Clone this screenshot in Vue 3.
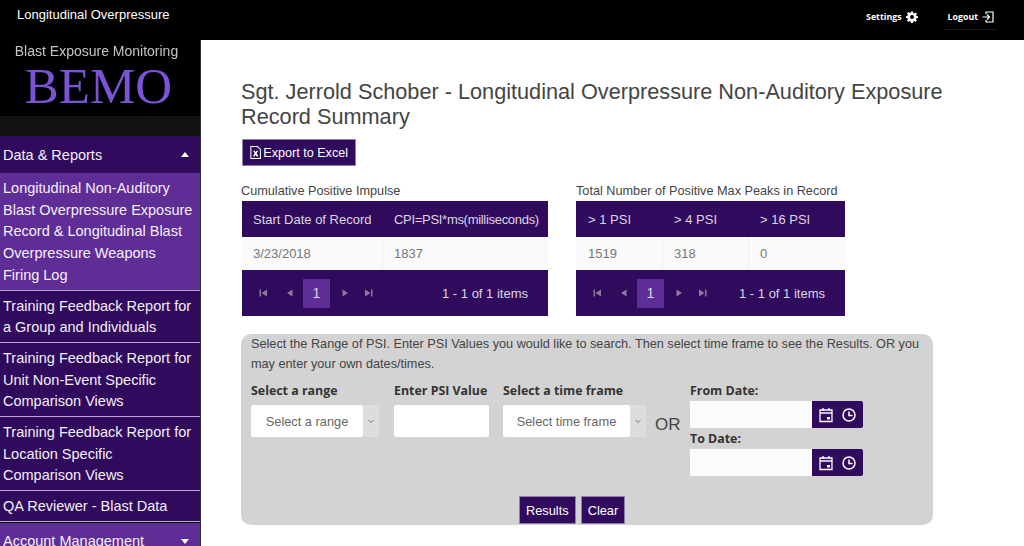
<script setup>
const menu = [
  { lines: ["Longitudinal Non-Auditory", "Blast Overpressure Exposure", "Record & Longitudinal Blast", "Overpressure Weapons", "Firing Log"], active: true },
  { lines: ["Training Feedback Report for", "a Group and Individuals"] },
  { lines: ["Training Feedback Report for", "Unit Non-Event Specific", "Comparison Views"] },
  { lines: ["Training Feedback Report for", "Location Specific", "Comparison Views"] },
  { lines: ["QA Reviewer - Blast Data"] },
]
const dateFields = ["From Date:", "To Date:"]
const tables = [
  { title: "Cumulative Positive Impulse", cls: "t1", heads: ["Start Date of Record", "CPI=PSI*ms(milliseconds)"], cells: ["3/23/2018", "1837"] },
  { title: "Total Number of Positive Max Peaks in Record", cls: "t2", heads: ["> 1 PSI", "> 4 PSI", "> 16 PSI"], cells: ["1519", "318", "0"] },
]
</script>

<template>
  <div class="page">
    <header class="topbar">
      <div class="brand">Longitudinal Overpressure</div>
      <div class="top-links">
        <a class="top-link">Settings
          <svg width="12" height="12" viewBox="0 0 24 24"><path fill="#fff" fill-rule="evenodd" d="M10 1h4l.6 3.2 1.900.8 2.700-1.800 2.800 2.800-1.800 2.700.8 1.900L24 10v4l-3.200.6-.8 1.900 1.800 2.700-2.800 2.800-2.700-1.800-1.900.8L14 24h-4l-.6-3.200-1.900-.8-2.700 1.800L2 19l1.800-2.700-.8-1.900L0 14v-4l3.200-.6.800-1.900L2 5l2.800-2.800 2.700 1.800 1.900-.8zM12 8a4 4 0 1 0 0 8 4 4 0 0 0 0-8z"/></svg>
        </a>
        <a class="top-link logout">Logout
          <svg width="12" height="12" viewBox="0 0 24 24" fill="none" stroke="#fff" stroke-width="2.400"><path d="M8 6V2h14v20H8v-4"/><path d="M1 12h13M10 7l5 5-5 5"/></svg>
        </a>
      </div>
    </header>
    <div class="body">
      <aside class="sidebar">
        <div class="logo">
          <div class="logo-sub">Blast Exposure Monitoring</div>
          <div class="logo-main">BEMO</div>
        </div>
        <div class="gap"></div>
        <div class="section">Data &amp; Reports<span class="caret up"></span></div>
        <div v-for="(item, i) in menu" :key="i" class="item" :class="{ active: item.active }">
          <div v-for="line in item.lines" :key="line">{{ line }}</div>
        </div>
        <div class="section account">Account Management<span class="caret"></span></div>
      </aside>
      <main class="content">
        <h1>Sgt. Jerrold Schober - Longitudinal Overpressure Non-Auditory Exposure Record Summary</h1>
        <button class="btn export">
          <svg width="13" height="15" viewBox="0 0 13 15"><path fill="none" stroke="#fff" stroke-width="1.200" d="M1 .6h7.500L12 4v10.400H1z"/><path fill="#fff" d="M3.500 5.500h2l1 1.800 1-1.800h2L7.600 8.500l2 3.500h-2l-1.100-2-1.100 2h-2l2-3.500z"/></svg>Export to Excel
        </button>
        <div class="tables">
          <section v-for="t in tables" :key="t.title" class="grid-box" :class="t.cls">
            <div class="grid-title">{{ t.title }}</div>
            <div class="row head"><div v-for="h in t.heads" :key="h" class="cell">{{ h }}</div></div>
            <div class="row data"><div v-for="c in t.cells" :key="c" class="cell">{{ c }}</div></div>
            <div class="pager">
              <div class="pages">
                <svg class="pg" viewBox="0 0 10 10"><path d="M1.500 1.500h1.500v7H1.500zM9 1.500v7L3.500 5z"/></svg>
                <svg class="pg" viewBox="0 0 10 10"><path d="M7.500 1.500v7L2 5z"/></svg>
                <span class="page-num">1</span>
                <svg class="pg" viewBox="0 0 10 10"><path d="M2.500 1.500v7L8 5z"/></svg>
                <svg class="pg" viewBox="0 0 10 10"><path d="M1 1.500v7L6.500 5zM7 1.500h1.500v7H7z"/></svg>
              </div>
              <div class="count">1 - 1 of 1 items</div>
            </div>
          </section>
        </div>
        <section class="panel">
          <p>Select the Range of PSI. Enter PSI Values you would like to search. Then select time frame to see the Results. OR you may enter your own dates/times.</p>
          <div class="form">
            <div class="col c-range">
              <label>Select a range</label>
              <div class="select"><span>Select a range</span><i><svg width="8" height="8" viewBox="0 0 8 8"><path fill="none" stroke="#777" d="M1.500 3l2.500 2.500L6.500 3"/></svg></i></div>
            </div>
            <div class="col c-psi">
              <label>Enter PSI Value</label>
              <input class="psi" type="text">
            </div>
            <div class="col c-time">
              <label>Select a time frame</label>
              <div class="select"><span>Select time frame</span><i><svg width="8" height="8" viewBox="0 0 8 8"><path fill="none" stroke="#777" d="M1.500 3l2.500 2.500L6.500 3"/></svg></i></div>
            </div>
            <div class="or">OR</div>
            <div class="col c-dates">
              <template v-for="d in dateFields" :key="d">
                <label>{{ d }}</label>
                <div class="date">
                  <input type="text">
                  <div class="date-btns">
                    <svg width="16" height="16" viewBox="0 0 16 16" fill="none" stroke="#fff" stroke-width="1.300"><path d="M2 3h12v11.500H2zM2 6h12M5 1v3M11 1v3"/><path fill="#fff" stroke="none" d="M9 10h3v2.500H9z"/></svg>
                    <svg width="16" height="16" viewBox="0 0 16 16" fill="none" stroke="#fff" stroke-width="1.500"><circle cx="8" cy="8" r="6"/><path d="M8 4.500V8.500h3.500"/></svg>
                  </div>
                </div>
              </template>
            </div>
          </div>
          <div class="actions">
            <button class="btn">Results</button>
            <button class="btn">Clear</button>
          </div>
        </section>
      </main>
    </div>
  </div>
</template>

<style scoped>
.page {
  width: 1024px;
  height: 546px;
  overflow: hidden;
  background: #fff;
  font-family: "Liberation Sans", Arial, sans-serif;
  color: #555;
}
.topbar {
  height: 40px;
  background: #000;
  display: flex;
  justify-content: space-between;
  color: #fff;
}
.brand {
  padding: 7px 0 0 17px;
  font-size: 13px;
  line-height: 15px;
}
.top-links {
  display: flex;
  padding-right: 27px;
}
.top-link {
  display: flex;
  align-items: center;
  gap: 4px;
  height: 30px;
  padding-top: 4px;
  box-sizing: border-box;
  font-size: 8.800px;
  font-weight: bold;
  font-family: "Open Sans", sans-serif;
}
.logout {
  margin-left: 27px;
  border-bottom: 1px solid #1a1a1a;
  padding: 4px 3px 0;
}
.body {
  display: flex;
}
.sidebar {
  width: 201px;
  flex: none;
  background: #000;
  color: #f4eff8;
  font-size: 14.500px;
  height: 506px;
  overflow: hidden;
  border-right: 1px solid #333;
  box-sizing: border-box;
}
.logo {
  height: 76px;
  text-align: center;
}
.logo-sub {
  padding: 3px 7px 0 0;
  font-size: 14px;
  line-height: 16px;
  color: #c4c4c4;
  filter: blur(0.6px);
}
.logo-main {
  font-family: "Liberation Serif", serif;
  font-size: 51px;
  line-height: 52px;
  margin-top: 1px;
  padding-right: 3px;
  color: #7c53d6;
  filter: blur(0.4px);
}
.gap {
  height: 20px;
  background: #111;
}
.section {
  height: 37px;
  padding-left: 3px;
  background: #300a5c;
  display: flex;
  justify-content: space-between;
  align-items: center;
}
.account {
  background: #5f2d96;
  border-top: 1px solid #000;
}
.caret {
  width: 0;
  height: 0;
  margin-right: 11px;
  border-left: 4px solid transparent;
  border-right: 4px solid transparent;
  border-top: 5px solid #fff;
}
.caret.up {
  border-top: 0;
  border-bottom: 5px solid #fff;
}
.item {
  padding: 5px 3px 3px;
  line-height: 21.700px;
  background: #300a5c;
  border-bottom: 1px solid #b9a7cf;
}
.item.active {
  background: #5f2d96;
}
.content {
  flex: 1;
  padding: 39px 0 0 40px;
  min-width: 0;
}
h1 {
  margin: 0;
  width: 720px;
  font-size: 21.700px;
  line-height: 25px;
  font-weight: normal;
  color: #444;
}
.btn {
  border: 1px solid #8f7ea6;
  background: #300a5c;
  color: #fff;
  font-family: inherit;
  font-size: 12.800px;
  padding: 0 6px;
  height: 28px;
  border-radius: 1px;
  cursor: pointer;
}
.export {
  margin: 10px 0 0 1px;
  width: 114px;
  height: 27px;
  display: flex;
  align-items: center;
  gap: 2px;
  padding: 0 7px;
  font-size: 12.600px;
  white-space: nowrap;
}
.tables {
  display: flex;
  gap: 28px;
  margin-top: 16px;
  margin-left: 1px;
}
.grid-box {
  font-size: 13px;
}
.t1 {
  width: 306px;
}
.t2 {
  width: 269px;
}
.grid-title {
  font-size: 12.700px;
  line-height: 18px;
  white-space: nowrap;
  color: #444;
}
.t1 .grid-title {
  margin-left: -1px;
}
.row {
  display: flex;
}
.row.head {
  height: 36px;
  background: #300a5c;
  color: #ddd6e6;
  margin-top: 1px;
}
.row.data {
  height: 33px;
  background: #fafafa;
  color: #777;
}
.cell {
  flex: 1;
  padding-left: 11px;
  display: flex;
  align-items: center;
  box-sizing: border-box;
  white-space: nowrap;
}
.t1 .cell:first-child {
  flex: none;
  width: 140px;
}
.t1 .head .cell + .cell {
  letter-spacing: -0.300px;
}
.t2 .cell {
  flex: none;
  width: 86px;
}
.t2 .cell:first-child {
  padding-left: 12px;
}
.t2 .cell:last-child {
  flex: 1;
}
.row.data .cell + .cell {
  border-left: 1px solid #eee;
}
.row.head .cell + .cell {
  border-left: 1px solid transparent;
}
.pager {
  height: 46px;
  background: #300a5c;
  display: flex;
  align-items: center;
  justify-content: space-between;
  padding: 0 20px 0 14px;
  color: #ddd6e6;
}
.pages {
  display: flex;
  align-items: center;
}
.pg {
  width: 10px;
  height: 10px;
  fill: #8a7a9c;
  margin: 0 9px 0 0;
  padding-left: 2px;
}
.pg:nth-child(2) {
  margin-right: 8px;
  margin-left: 6px;
}
.pg:nth-child(4) {
  margin-left: 8px;
  margin-right: 6px;
}
.pg:nth-child(5) {
  margin-left: 6px;
}
.page-num {
  width: 27px;
  height: 29px;
  background: #5f2d96;
  font-size: 14px;
  display: flex;
  align-items: center;
  justify-content: center;
}
.panel {
  margin-top: 18px;
  width: 692px;
  height: 191px;
  box-sizing: border-box;
  background: #d3d3d3;
  border-radius: 10px;
  padding: 1px 8px 0 10px;
  font-size: 12.700px;
}
.panel p {
  margin: 0;
  line-height: 19.500px;
  color: #444;
}
.form {
  display: flex;
  margin-top: 8px;
  color: #333;
}
.col {
  display: flex;
  flex-direction: column;
}
.col label {
  font-family: "Open Sans", sans-serif;
  font-weight: bold;
  font-size: 12.400px;
  line-height: 18px;
  color: #333;
  white-space: nowrap;
}
.c-range { width: 128px; margin-right: 15px; }
.c-psi { width: 95px; margin-right: 14px; }
.c-time { width: 143px; }
.select {
  display: flex;
  height: 32px;
  margin-top: 5px;
  color: #666;
  font-size: 12.800px;
}
.select span {
  flex: 1;
  background: #fff;
  border-radius: 2px;
  display: flex;
  align-items: center;
  justify-content: center;
}
.select i {
  width: 16px;
  background: #ddd;
  display: flex;
  align-items: center;
  justify-content: center;
}
.psi {
  margin-top: 5px;
  height: 32px;
  width: 95px;
  border: 0;
  border-radius: 2px;
  padding: 0;
  background: #fff;
}
.or {
  font-size: 17px;
  color: #444;
  width: 25px;
  margin: 33px 10px 0 9px;
  line-height: 20px;
}
.date {
  display: flex;
  height: 27px;
  margin-top: 1px;
}
.date + label {
  margin-top: 2px;
}
.date input {
  width: 122px;
  border: 0;
  padding: 0;
  background: #fbfbfb;
  box-sizing: border-box;
}
.date-btns {
  width: 51px;
  background: #300a5c;
  border-radius: 0 2px 2px 0;
  display: flex;
  align-items: center;
  justify-content: space-around;
  padding: 0 2px;
  box-sizing: border-box;
}
.actions {
  display: flex;
  gap: 5px;
  margin: 20px 0 0 268px;
}
</style>

<style>
html, body { margin: 0; background: #fff; }
</style>
